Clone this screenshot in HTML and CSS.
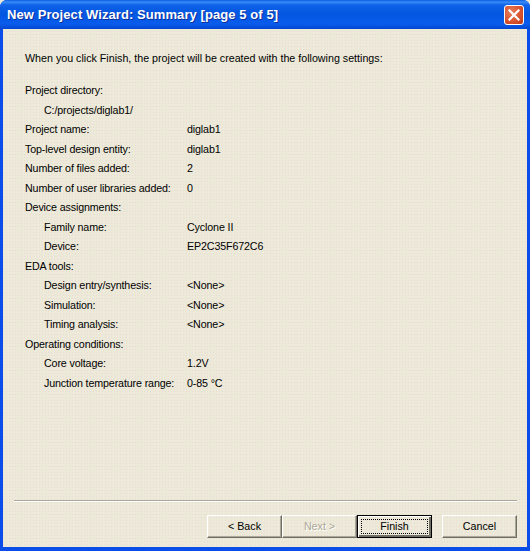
FILE: index.html
```html
<!DOCTYPE html>
<html>
<head>
    <meta charset="utf-8" />
    <title>New Project Wizard: Summary [page 5 of 5]</title>
    <link rel="stylesheet" href="styles.css">
</head>
<body>
    <div class="window">
        <div class="titlebar">
            <span class="title">New Project Wizard: Summary [page 5 of 5]</span>
            <div class="close">
                <svg width="12" height="12" viewBox="0 0 12 12"><path d="M1.5 1.5L10.5 10.5M10.5 1.5L1.5 10.5" stroke="#fff" stroke-width="2.2" stroke-linecap="square" fill="none"/></svg>
            </div>
        </div>
        <div class="content">
            <p class="intro">When you click Finish, the project will be created with the following settings:</p>
            <div class="summary">
                <div class="row"><span class="label">Project directory:</span></div>
                <div class="row sub"><span class="label">C:/projects/diglab1/</span></div>
                <div class="row"><span class="label">Project name:</span><span>diglab1</span></div>
                <div class="row"><span class="label">Top-level design entity:</span><span>diglab1</span></div>
                <div class="row"><span class="label">Number of files added:</span><span>2</span></div>
                <div class="row"><span class="label">Number of user libraries added:</span><span>0</span></div>
                <div class="row"><span class="label">Device assignments:</span></div>
                <div class="row sub"><span class="label">Family name:</span><span>Cyclone II</span></div>
                <div class="row sub"><span class="label">Device:</span><span>EP2C35F672C6</span></div>
                <div class="row"><span class="label">EDA tools:</span></div>
                <div class="row sub"><span class="label">Design entry/synthesis:</span><span>&lt;None&gt;</span></div>
                <div class="row sub"><span class="label">Simulation:</span><span>&lt;None&gt;</span></div>
                <div class="row sub"><span class="label">Timing analysis:</span><span>&lt;None&gt;</span></div>
                <div class="row"><span class="label">Operating conditions:</span></div>
                <div class="row sub"><span class="label">Core voltage:</span><span>1.2V</span></div>
                <div class="row sub"><span class="label">Junction temperature range:</span><span>0-85 °C</span></div>
            </div>
            <div class="separator"></div>
            <div class="buttons">
                <button class="btn">&lt; Back</button>
                <button class="btn" disabled>Next &gt;</button>
                <button class="btn default"><span class="focus">Finish</span></button>
                <button class="btn cancel">Cancel</button>
            </div>
        </div>
    </div>
</body>
</html>
```

FILE: styles.css
```css
html, body {
    margin: 0;
    width: 530px;
    height: 551px;
    overflow: hidden;
    background-color: #ece9d8;
}

.window {
    display: flex;
    flex-direction: column;
    width: 530px;
    height: 551px;
    box-sizing: border-box;
    border-radius: 7px 7px 0 0;
    padding: 0 3px 4px 3px;
    background: #0a4de8;
    font-family: "Liberation Sans", Arial, sans-serif;
    font-size: 10.7px;
    color: #000;
}

.titlebar {
    display: flex;
    align-items: center;
    justify-content: space-between;
    height: 29px;
    flex: none;
    margin: 0 -3px;
    padding: 0 6px 0 7px;
    border-radius: 7px 7px 0 0;
    background: linear-gradient(to bottom, #0a5ee0 0, #3a8cf8 2px, #0f62e8 5px, #0256e0 14px, #0a5cec 24px, #0346d0 29px);
}

.title {
    color: #fff;
    font-size: 13px;
    font-weight: bold;
    letter-spacing: 0.08px;
    text-shadow: 1px 1px 0 #0f2f9a;
}

.close {
    display: flex;
    align-items: center;
    justify-content: center;
    width: 20px;
    height: 20px;
    box-sizing: border-box;
    border: 1px solid #fff;
    border-radius: 3px;
    background: radial-gradient(circle at 35% 35%, #e8805c, #d8502c 60%, #b83a18);
}

/* dithered dialog face, as the 256 colour capture has it */
.content {
    display: flex;
    flex-direction: column;
    flex: 1;
    background-color: #ece9d8;
    background-image:
        linear-gradient(45deg, #e9dcd6 1px, transparent 1px),
        linear-gradient(45deg, #f2efe2 1px, transparent 1px);
    background-size: 3px 3px, 5px 4px;
    padding: 0 10px 0 11px;
}

.intro {
    margin: 22px 0 0 11px;
    line-height: 14px;
}

.summary {
    flex: 1;
    margin: 18px 0 0 11px;
    letter-spacing: -0.13px;
}

.row {
    display: flex;
    height: 19.5px;
    line-height: 14px;
}

.label {
    width: 162px;
    flex: none;
    white-space: nowrap;
}

.sub .label {
    width: 143px;
    margin-left: 19px;
}

.separator {
    height: 1px;
    background-color: #aca899;
    border-bottom: 1px solid #fff;
}

.buttons {
    display: flex;
    justify-content: flex-end;
    margin-top: 13px;
    margin-bottom: 9px;
}

.btn {
    width: 75px;
    height: 23px;
    padding: 0 0 2px;
    box-sizing: border-box;
    background: transparent;
    border: 1px solid;
    border-color: #fff #716f64 #716f64 #fff;
    box-shadow: inset -1px -1px 0 #aca899;
    font-family: inherit;
    font-size: 10.7px;
    color: #000;
}

.btn:disabled {
    color: #aca899;
    text-shadow: 1px 1px 0 #fff;
}

.default {
    padding: 0;
    border: 1px solid #000;
    box-shadow: inset 1px 1px 0 #fff, inset -2px -2px 0 #716f64;
}

.focus {
    display: block;
    margin: 2px 3px 3px;
    line-height: 13px;
    border: 1px dotted #000;
}

.cancel {
    margin-left: 10px;
}
```
